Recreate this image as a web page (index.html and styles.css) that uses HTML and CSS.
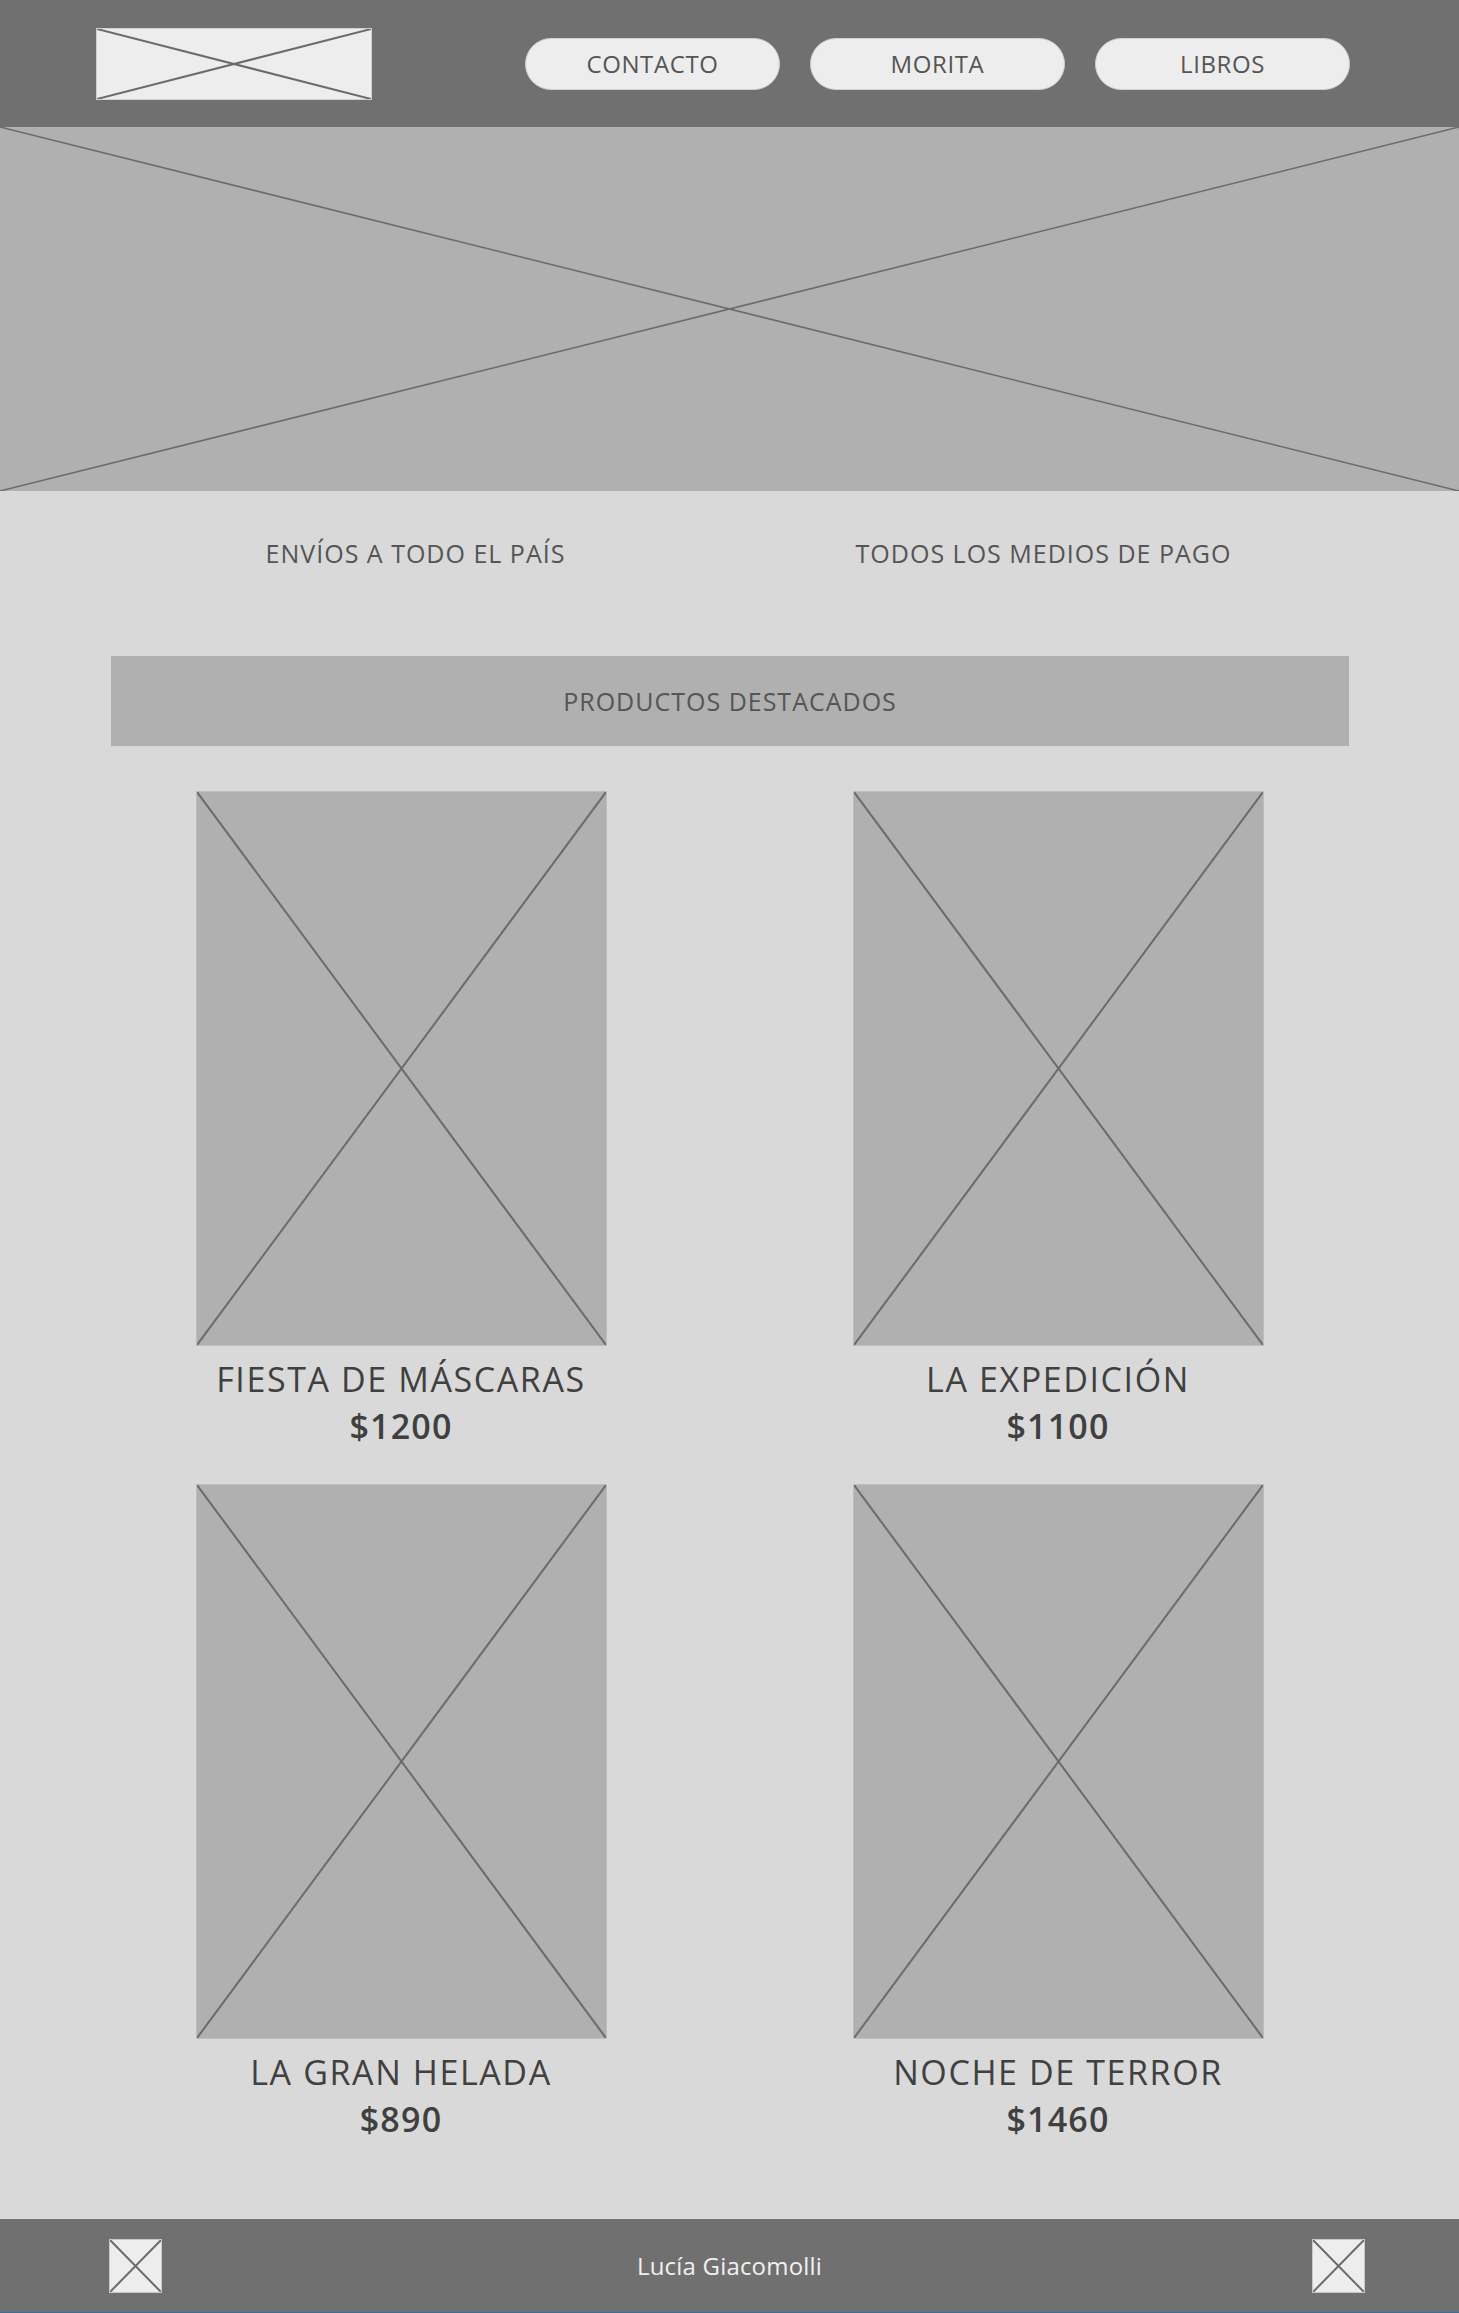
FILE: index.html
```html
<!DOCTYPE html>
<html lang="es">
<head>
    <meta charset="UTF-8">
    <meta name="viewport" content="width=device-width, initial-scale=1.0">
    <title>Libros</title>
    <link rel="stylesheet" href="styles.css">
</head>
<body>
    <header class="top">
        <div class="logo">
            <svg class="cross" viewBox="0 0 100 100" preserveAspectRatio="none"><line x1="0" y1="0" x2="100" y2="100"/><line x1="100" y1="0" x2="0" y2="100"/></svg>
        </div>
        <nav class="menu">
            <a href="#" class="pill">CONTACTO</a>
            <a href="#" class="pill">MORITA</a>
            <a href="#" class="pill">LIBROS</a>
        </nav>
    </header>

    <div class="hero">
        <svg class="cross" viewBox="0 0 100 100" preserveAspectRatio="none"><line x1="0" y1="0" x2="100" y2="100"/><line x1="100" y1="0" x2="0" y2="100"/></svg>
    </div>

    <main class="content">
        <div class="info">
            <p>ENVÍOS A TODO EL PAÍS</p>
            <p>TODOS LOS MEDIOS DE PAGO</p>
        </div>

        <h2 class="featured">PRODUCTOS DESTACADOS</h2>

        <div class="products">
            <div class="product">
                <div class="cover"><svg class="cross" viewBox="0 0 100 100" preserveAspectRatio="none"><line x1="0" y1="0" x2="100" y2="100"/><line x1="100" y1="0" x2="0" y2="100"/></svg></div>
                <h3>FIESTA DE MÁSCARAS</h3>
                <p class="price">$1200</p>
            </div>
            <div class="product">
                <div class="cover"><svg class="cross" viewBox="0 0 100 100" preserveAspectRatio="none"><line x1="0" y1="0" x2="100" y2="100"/><line x1="100" y1="0" x2="0" y2="100"/></svg></div>
                <h3>LA EXPEDICIÓN</h3>
                <p class="price">$1100</p>
            </div>
            <div class="product">
                <div class="cover"><svg class="cross" viewBox="0 0 100 100" preserveAspectRatio="none"><line x1="0" y1="0" x2="100" y2="100"/><line x1="100" y1="0" x2="0" y2="100"/></svg></div>
                <h3>LA GRAN HELADA</h3>
                <p class="price">$890</p>
            </div>
            <div class="product">
                <div class="cover"><svg class="cross" viewBox="0 0 100 100" preserveAspectRatio="none"><line x1="0" y1="0" x2="100" y2="100"/><line x1="100" y1="0" x2="0" y2="100"/></svg></div>
                <h3>NOCHE DE TERROR</h3>
                <p class="price">$1460</p>
            </div>
        </div>
    </main>

    <footer class="bottom">
        <div class="social first"><svg class="cross" viewBox="0 0 100 100" preserveAspectRatio="none"><line x1="0" y1="0" x2="100" y2="100"/><line x1="100" y1="0" x2="0" y2="100"/></svg></div>
        <span class="author">Lucía Giacomolli</span>
        <div class="social last"><svg class="cross" viewBox="0 0 100 100" preserveAspectRatio="none"><line x1="0" y1="0" x2="100" y2="100"/><line x1="100" y1="0" x2="0" y2="100"/></svg></div>
    </footer>
</body>
</html>
```

FILE: styles.css
```css
* {
    box-sizing: border-box;
}

body {
    margin: 0;
    font-family: "Open Sans", "Noto Sans", sans-serif;
    background-color: #d9d9d9;
    color: #555;
}

.cross {
    display: block;
    width: 100%;
    height: 100%;
}

.cross line {
    stroke: #6b6b6b;
    stroke-width: 2;
    vector-effect: non-scaling-stroke;
}

.hero .cross line {
    stroke-width: 1.5;
}

/* header */
.top {
    height: 127px;
    background-color: #707070;
    display: flex;
    align-items: center;
    justify-content: space-between;
    padding: 0 109px 0 96px;
}

.logo {
    width: 276px;
    height: 72px;
    background-color: #ededed;
    border: 1px solid #d0d0d0;
}

.menu {
    display: flex;
    gap: 30px;
}

.pill {
    width: 255px;
    height: 52px;
    border-radius: 26px;
    background-color: #ededed;
    border: 1px solid #cfcfcf;
    display: flex;
    align-items: center;
    justify-content: center;
    font-size: 24px;
    letter-spacing: 0.6px;
    color: #555;
    text-decoration: none;
}

/* hero */
.hero {
    height: 364px;
    background-color: #b0b0b0;
}

/* main */
.content {
    padding: 40px 0 76px;
}

.info {
    display: flex;
    justify-content: center;
    margin-bottom: 81px;
}

.info p {
    width: 628px;
    margin: 0;
    text-align: center;
    font-size: 25px;
    letter-spacing: 1px;
    line-height: 44px;
}

.featured {
    margin: 0 110px 45px 111px;
    height: 90px;
    background-color: #b0b0b0;
    display: flex;
    align-items: center;
    justify-content: center;
    font-size: 25px;
    letter-spacing: 1px;
    font-weight: normal;
    color: #555;
}

.products {
    display: grid;
    grid-template-columns: 411px 411px;
    justify-content: center;
    column-gap: 246px;
    row-gap: 34px;
}

.product {
    text-align: center;
    color: #404040;
}

.cover {
    height: 555px;
    background-color: #b0b0b0;
    border: 1px solid #bdbdbd;
    margin-bottom: 10px;
}

.product h3 {
    margin: 0;
    font-size: 34px;
    font-weight: normal;
    letter-spacing: 1.6px;
    line-height: 47px;
}

.price {
    margin: 0;
    font-size: 34px;
    font-weight: 600;
    letter-spacing: 1.2px;
    line-height: 47px;
}

/* footer */
.bottom {
    height: 94px;
    background-color: #707070;
    border-bottom: 1px solid #3d6d99;
    display: grid;
    grid-template-columns: 1fr auto 1fr;
    align-items: center;
    padding: 0 94px;
}

.social {
    width: 53px;
    height: 54px;
    background-color: #ededed;
    border: 1px solid #c8c8c8;
}

.social.first {
    margin-left: 15px;
}

.social.last {
    justify-self: end;
}

.author {
    color: #f0f0f0;
    font-size: 24px;
    letter-spacing: 0.2px;
}
```
